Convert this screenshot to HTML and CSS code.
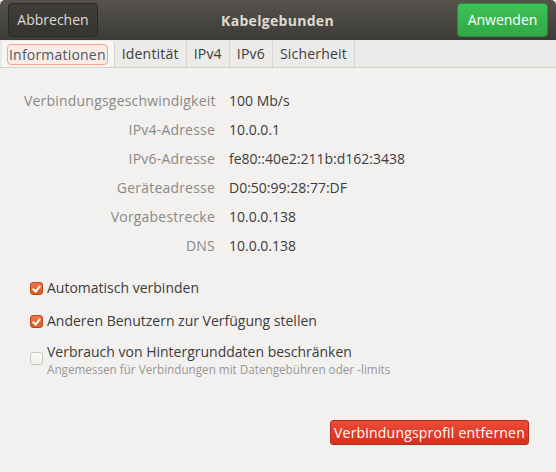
FILE: index.html
```html
<!DOCTYPE html>
<html lang="de">
<head>
    <meta charset="UTF-8">
    <title>Kabelgebunden</title>
    <link rel="stylesheet" href="styles.css">
</head>
<body>
    <div class="window">
        <div class="headerbar">
            <div class="btn btn-cancel">Abbrechen</div>
            <div class="title">Kabelgebunden</div>
            <div class="btn btn-apply">Anwenden</div>
        </div>
        <div class="tabs">
            <div class="tab active"><span class="focus">Informationen</span></div>
            <div class="tab">Identität</div>
            <div class="tab">IPv4</div>
            <div class="tab">IPv6</div>
            <div class="tab">Sicherheit</div>
        </div>
        <div class="content">
            <div class="details">
                <div class="label">Verbindungsgeschwindigkeit</div>
                <div class="value">100 Mb/s</div>
                <div class="label">IPv4-Adresse</div>
                <div class="value">10.0.0.1</div>
                <div class="label">IPv6-Adresse</div>
                <div class="value">fe80::40e2:211b:d162:3438</div>
                <div class="label">Geräteadresse</div>
                <div class="value">D0:50:99:28:77:DF</div>
                <div class="label">Vorgabestrecke</div>
                <div class="value">10.0.0.138</div>
                <div class="label">DNS</div>
                <div class="value">10.0.0.138</div>
            </div>
            <div class="options">
                <div class="check-row">
                    <span class="check checked"></span>
                    <span class="check-text">Automatisch verbinden</span>
                </div>
                <div class="check-row">
                    <span class="check checked"></span>
                    <span class="check-text">Anderen Benutzern zur Verfügung stellen</span>
                </div>
                <div class="check-row multi">
                    <span class="check"></span>
                    <div class="check-text">
                        <div>Verbrauch von Hintergrunddaten beschränken</div>
                        <div class="hint">Angemessen für Verbindungen mit Datengebühren oder -limits</div>
                    </div>
                </div>
            </div>
            <div class="footer">
                <div class="btn-remove">Verbindungsprofil entfernen</div>
            </div>
        </div>
    </div>
</body>
</html>
```

FILE: styles.css
```css
body {
    margin: 0;
    background: #f2f1f0;
    font-family: "Open Sans", "DejaVu Sans", sans-serif;
    font-size: 14px;
    color: #3c3c3c;
}

.window {
    width: 556px;
    height: 472px;
    display: flex;
    flex-direction: column;
}

.headerbar {
    height: 40px;
    display: flex;
    align-items: center;
    justify-content: space-between;
    padding: 0 8px;
    background: linear-gradient(#56534d, #3c3b37);
    border-radius: 5px 5px 0 0;
    box-sizing: border-box;
}

.title {
    color: #dfdbd2;
    font-weight: 700;
    font-size: 14px;
    letter-spacing: 0.3px;
}

.btn {
    height: 34px;
    line-height: 32px;
    box-sizing: border-box;
    border-radius: 4px;
    text-align: center;
    font-size: 14px;
}

.btn-cancel {
    width: 90px;
    background: linear-gradient(#403e3a, #36342f);
    border: 1px solid #2a2926;
    color: #dfdbd2;
}

.btn-apply {
    width: 91px;
    background: linear-gradient(#3ec257, #30a846);
    border: 1px solid #2a8f3b;
    color: #ffffff;
}

.tabs {
    height: 28px;
    display: flex;
    padding-left: 2px;
    background: #edebe9;
    border-bottom: 1px solid #d3cfc9;
    box-sizing: border-box;
    letter-spacing: 0.2px;
}

.tab {
    display: flex;
    align-items: center;
    padding: 0 7px;
    border-right: 1px solid #d8d5d0;
    color: #3c3c3c;
}

.tab.active {
    background: #f7f6f5;
    padding: 0 6px 0 5px;
    border-radius: 3px 3px 0 0;
    margin-top: 1px;
}

.focus {
    border: 1px solid #f3a68c;
    background: #f9ece7;
    border-radius: 4px;
    padding: 0 1px;
    line-height: 19px;
    color: #4b5866;
}

.content {
    flex: 1;
    display: flex;
    flex-direction: column;
}

.details {
    display: grid;
    grid-template-columns: 191px auto;
    grid-auto-rows: 29px;
    column-gap: 14px;
    align-items: center;
    padding: 18px 0 0 24px;
}

.label {
    text-align: right;
    color: #8b8884;
    white-space: nowrap;
    letter-spacing: 0.2px;
}

.value {
    color: #3c3c3c;
}

.options {
    padding: 19px 0 0 30px;
    display: flex;
    flex-direction: column;
    gap: 15px;
}

.check-row {
    display: flex;
    align-items: center;
    gap: 4px;
    height: 18px;
}

.check-row.multi {
    align-items: flex-start;
    height: auto;
    margin-top: -3px;
}

.check-row.multi .check {
    margin-top: 10px;
}

.check-row.multi .check-text {
    line-height: 19px;
}

.check {
    width: 13px;
    height: 13px;
    box-sizing: border-box;
    border-radius: 3px;
    border: 1px solid #c9c5bf;
    background: linear-gradient(#ffffff, #efedeb);
    flex-shrink: 0;
}

.check.checked {
    border-color: #b8471b;
    background: linear-gradient(#ef7746, #db5b25);
    position: relative;
}

.check.checked::after {
    content: "";
    position: absolute;
    left: 3px;
    top: 1px;
    width: 3px;
    height: 6px;
    border: solid #ffffff;
    border-width: 0 2px 2px 0;
    transform: rotate(40deg);
}

.check-text {
    line-height: 18px;
}

.check-row.multi .hint {
    font-size: 11.7px;
    line-height: 16px;
    color: #9a9792;
}

.footer {
    display: flex;
    justify-content: flex-end;
    padding: 43px 27px 0 0;
}

.btn-remove {
    width: 199px;
    height: 25px;
    line-height: 23px;
    box-sizing: border-box;
    text-align: center;
    border: 1px solid #ad2e1f;
    border-radius: 3px;
    background: linear-gradient(#ec4a38, #d9301f);
    color: #ffffff;
    font-size: 14px;
    letter-spacing: 0.2px;
}
```
